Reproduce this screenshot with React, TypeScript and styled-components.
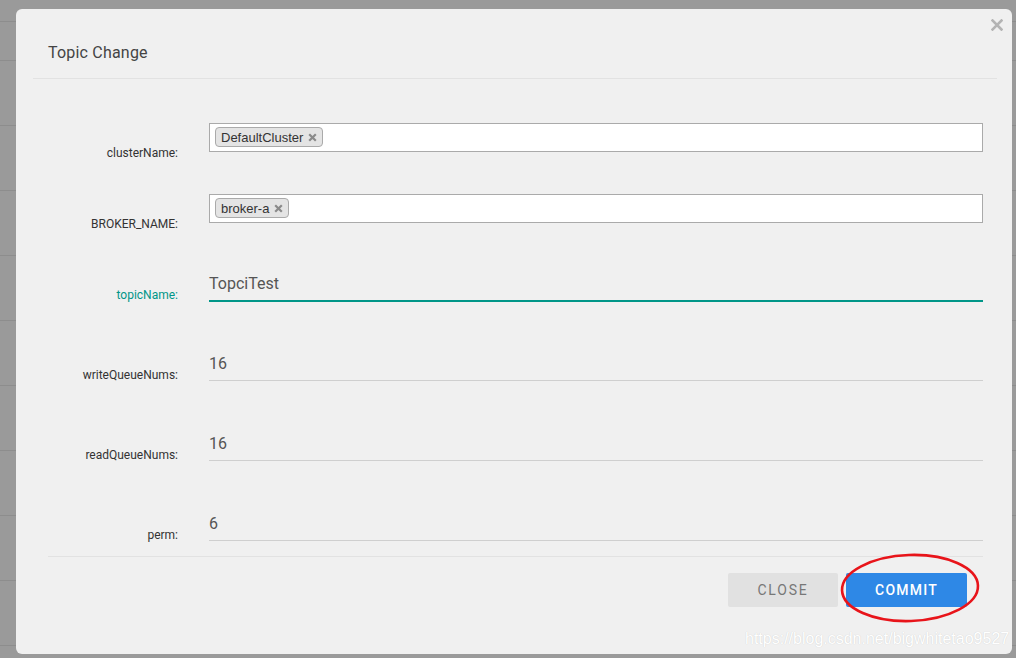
import styled, { createGlobalStyle } from 'styled-components';

const GlobalStyle = createGlobalStyle`
    html, body {
        margin: 0;
        padding: 0;
        height: 100%;
        overflow: hidden;
    }
    body {
        font-family: Roboto, "Liberation Sans", sans-serif;
        background: #9a9a9a;
    }
`

const Page = styled.div`
    position: relative;
    width: 1016px;
    height: 658px;
    overflow: hidden;
    background: #9a9a9a;
`

const BackRow = styled.div<{ h: number }>`
    height: ${p => p.h}px;
    border-bottom: 1px solid #8d8d8d;
    box-sizing: border-box;
`

const Modal = styled.div`
    position: absolute;
    left: 16px;
    top: 9px;
    width: 996px;
    height: 645px;
    background: #f0f0f0;
    border-radius: 6px;
    display: flex;
    flex-direction: column;
`

const Header = styled.div`
    margin: 0 15px 0 17px;
    height: 70px;
    box-sizing: border-box;
    padding: 0 0 15px 15px;
    display: flex;
    align-items: flex-end;
    border-bottom: 1px solid #e2e2e2;
`

const Title = styled.h4`
    margin: 0;
    font-size: 16px;
    line-height: 20px;
    font-weight: 400;
    color: #444;
    letter-spacing: 0.2px;
`

const CloseX = styled.button`
    position: absolute;
    right: 9px;
    top: 10px;
    width: 12px;
    height: 12px;
    padding: 0;
    border: 0;
    background: none;
    cursor: pointer;
    svg { display: block; }
`

const Body = styled.div`
    padding: 44px 29px 0 32px;
`

const Row = styled.div<{ gap: number }>`
    display: grid;
    grid-template-columns: 130px 1fr;
    column-gap: 31px;
    align-items: end;
    margin-top: ${p => p.gap}px;
`

const Label = styled.label<{ active?: boolean; lift?: number }>`
    text-align: right;
    font-size: 12px;
    line-height: 14px;
    color: ${p => (p.active ? '#009688' : '#333')};
    margin-bottom: ${p => p.lift ?? 0}px;
`

const SelectBox = styled.div`
    height: 29px;
    box-sizing: border-box;
    background: #fff;
    border: 1px solid #aaa;
    margin-bottom: 8px;
    padding: 3px 5px;
    display: flex;
    align-items: flex-start;
`

const Tag = styled.span`
    display: inline-flex;
    align-items: center;
    gap: 5px;
    height: 20px;
    box-sizing: border-box;
    padding: 0 5px 0 5px;
    border: 1px solid #aaa;
    border-radius: 4px;
    background: #e4e4e4;
    font-family: "Liberation Sans", Arial, sans-serif;
    font-size: 13px;
    color: #333;
    svg { display: block; }
`

const LineInput = styled.div<{ active?: boolean }>`
    height: 34px;
    display: flex;
    align-items: center;
    font-size: 16px;
    color: #555;
    border-bottom: 1px solid ${p => (p.active ? '#009688' : '#cfcfcf')};
    box-shadow: ${p => (p.active ? '0 1px 0 0 #009688' : 'none')};
`

const FooterLine = styled.div`
    margin-top: 15px;
    border-top: 1px solid #e2e2e2;
`

const Footer = styled.div`
    display: flex;
    justify-content: flex-end;
    gap: 8px;
    padding: 16px 16px 0 0;
`

const Button = styled.button<{ primary?: boolean }>`
    height: 34px;
    width: ${p => (p.primary ? 121 : 110)}px;
    border: 0;
    border-radius: 2px;
    font-family: Roboto, "Liberation Sans", sans-serif;
    font-size: 14px;
    letter-spacing: ${p => (p.primary ? 1.2 : 1.8)}px;
    font-weight: ${p => (p.primary ? 500 : 400)};
    background: ${p => (p.primary ? '#2e88e6' : '#e1e1e1')};
    color: ${p => (p.primary ? '#fff' : '#777')};
    cursor: pointer;
`

const Circle = styled.svg`
    position: absolute;
    left: 838px;
    top: 551px;
    pointer-events: none;
`

const Watermark = styled.div`
    position: absolute;
    left: 745px;
    top: 630px;
    font-family: "Liberation Sans", Arial, sans-serif;
    font-size: 16px;
    color: #ffffff;
    text-shadow: 0 0 1px rgba(0, 0, 0, 0.18);
    white-space: nowrap;
`

const RemoveIcon = () => (
    <svg width="9" height="9" viewBox="0 0 9 9">
        <path d="M1.2 1.2 L7.8 7.8 M7.8 1.2 L1.2 7.8" stroke="#8a8a8a" strokeWidth="2.2" />
    </svg>
)

const backRows = [22, 39, 65, 65, 65, 65, 65, 65, 65, 65, 65, 20];

const App = () => {
    return <>
        <GlobalStyle />
        <Page>
            {backRows.map((h, i) => <BackRow key={i} h={h} />)}
            <Modal>
                <CloseX aria-label="close">
                    <svg width="12" height="12" viewBox="0 0 12 12">
                        <path d="M1.5 1.5 L10.5 10.5 M10.5 1.5 L1.5 10.5" stroke="#b4b4b4" strokeWidth="2.6" strokeLinecap="square" />
                    </svg>
                </CloseX>
                <Header>
                    <Title>Topic Change</Title>
                </Header>
                <Body>
                    <Row gap={0}>
                        <Label>clusterName:</Label>
                        <SelectBox>
                            <Tag>DefaultCluster<RemoveIcon /></Tag>
                        </SelectBox>
                    </Row>
                    <Row gap={34}>
                        <Label>BROKER_NAME:</Label>
                        <SelectBox>
                            <Tag>broker-a<RemoveIcon /></Tag>
                        </SelectBox>
                    </Row>
                    <Row gap={35}>
                        <Label active lift={-1}>topicName:</Label>
                        <LineInput active>TopciTest</LineInput>
                    </Row>
                    <Row gap={45}>
                        <Label lift={-1}>writeQueueNums:</Label>
                        <LineInput>16</LineInput>
                    </Row>
                    <Row gap={45}>
                        <Label lift={-1}>readQueueNums:</Label>
                        <LineInput>16</LineInput>
                    </Row>
                    <Row gap={45}>
                        <Label lift={-1}>perm:</Label>
                        <LineInput>6</LineInput>
                    </Row>
                    <FooterLine />
                    <Footer>
                        <Button>CLOSE</Button>
                        <Button primary>COMMIT</Button>
                    </Footer>
                </Body>
            </Modal>
            <Circle width="146" height="76" viewBox="0 0 146 76">
                <ellipse cx="72" cy="37" rx="68" ry="33" fill="none" stroke="#e8141a" strokeWidth="2.6" transform="rotate(-2 72 37)" />
            </Circle>
            <Watermark>https://blog.csdn.net/bigwhitetao9527</Watermark>
        </Page>
    </>
}

export default App;
